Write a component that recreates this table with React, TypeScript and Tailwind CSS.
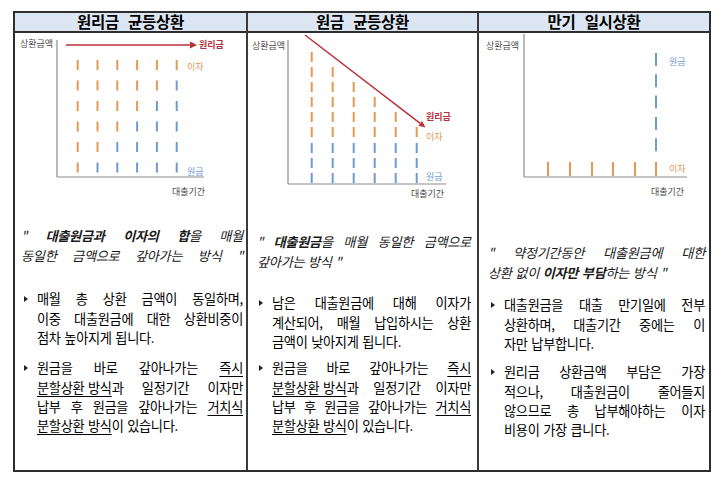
import type { ReactNode } from 'react'

const ORANGE = '#e39a55'
const BLUE = '#6f9bd1'
const RED = '#b7313a'
const AXIS = '#8c8c8c'
const LABEL = '#4a4a4a'

function Label({
  x,
  y,
  color = LABEL,
  bold = false,
  children,
}: {
  x: number
  y: number
  color?: string
  bold?: boolean
  children: ReactNode
}) {
  return (
    <text x={x} y={y} fontSize={9} fill={color} fontWeight={bold ? 700 : 400}>
      {children}
    </text>
  )
}

const six = [0, 1, 2, 3, 4, 5]

// 원리금 균등: total stays flat, principal share grows each period
function EqualPaymentChart() {
  const segs = [27, 47.5, 68, 88.5, 109, 129.5]
  return (
    <svg width={231} height={170} className="block shrink-0">
      <Label x={5} y={14}>상환금액</Label>
      <line x1={42} y1={7} x2={42} y2={144} stroke={AXIS} strokeWidth={1.2} />
      <line x1={42} y1={144} x2={189} y2={144} stroke={AXIS} strokeWidth={1.2} />
      <line x1={51} y1={12} x2={176} y2={12} stroke={RED} strokeWidth={1.5} />
      <polygon points="175,8.5 182,12 175,15.5" fill={RED} />
      <Label x={184} y={15} color={RED} bold>
        원리금
      </Label>
      {six.map((i) =>
        segs.map((y, j) => (
          <line
            key={`${i}-${j}`}
            x1={62.7 + i * 19.8}
            x2={62.7 + i * 19.8}
            y1={y}
            y2={y + 10}
            stroke={j < 6 - i ? ORANGE : BLUE}
            strokeWidth={2}
          />
        ))
      )}
      <Label x={172} y={37} color={ORANGE}>이자</Label>
      <Label x={172} y={142} color={BLUE}>원금</Label>
      <Label x={157} y={162}>대출기간</Label>
    </svg>
  )
}

// 원금 균등: principal flat, interest shrinks
function EqualPrincipalChart() {
  const blue = [110, 125, 140]
  const orange = [94, 79, 64, 49, 34, 19]
  return (
    <svg width={229} height={170} className="block shrink-0">
      <Label x={4} y={16}>상환금액</Label>
      <line x1={40} y1={7} x2={40} y2={151} stroke={AXIS} strokeWidth={1.2} />
      <line x1={40} y1={151} x2={198} y2={151} stroke={AXIS} strokeWidth={1.2} />
      {six.map((i) => {
        const x = 63.7 + i * 21
        return (
          <g key={i}>
            {blue.map((y) => (
              <line key={`b${y}`} x1={x} x2={x} y1={y} y2={y + 10} stroke={BLUE} strokeWidth={2} />
            ))}
            {orange.slice(0, 6 - i).map((y) => (
              <line key={`o${y}`} x1={x} x2={x} y1={y} y2={y + 10} stroke={ORANGE} strokeWidth={2} />
            ))}
          </g>
        )
      })}
      <line x1={57} y1={2} x2={172.2} y2={90.3} stroke={RED} strokeWidth={1.5} />
      <polygon points="170.4,92.7 177.5,94.4 174.1,88" fill={RED} />
      <Label x={178} y={87} color={RED} bold>
        원리금
      </Label>
      <Label x={178} y={107} color={ORANGE}>이자</Label>
      <Label x={178} y={147} color={BLUE}>원금</Label>
      <Label x={163} y={164}>대출기간</Label>
    </svg>
  )
}

// 만기 일시: interest only, principal at the end
function BulletChart() {
  const orangeX = [69, 91, 113, 134, 156, 177]
  return (
    <svg width={230} height={170} className="block shrink-0">
      <Label x={7} y={16}>상환금액</Label>
      <line x1={45} y1={1} x2={45} y2={144} stroke={AXIS} strokeWidth={1.2} />
      <line x1={45} y1={144} x2={208} y2={144} stroke={AXIS} strokeWidth={1.2} />
      {[20, 41.3, 62.6, 83.9, 105.2].map((y) => (
        <line key={y} x1={177} x2={177} y1={y} y2={y + 13} stroke={BLUE} strokeWidth={2} />
      ))}
      {orangeX.map((x) => (
        <line key={x} x1={x} x2={x} y1={129} y2={143} stroke={ORANGE} strokeWidth={2} />
      ))}
      <Label x={190} y={32} color={BLUE}>원금</Label>
      <Label x={190} y={139} color={ORANGE}>이자</Label>
      <Label x={172} y={162}>대출기간</Label>
    </svg>
  )
}

// justified line: words spread edge to edge
function J({ w }: { w: ReactNode[] }) {
  return (
    <div className="flex justify-between whitespace-nowrap">
      {w.map((item, i) => (
        <span key={i}>{item}</span>
      ))}
    </div>
  )
}

function L({ children }: { children: ReactNode }) {
  return <div className="whitespace-nowrap">{children}</div>
}

function U({ children }: { children: ReactNode }) {
  return <span className="underline underline-offset-[3px] decoration-1">{children}</span>
}

function Bullet({
  marker,
  className = '',
  children,
}: {
  marker: string
  className?: string
  children: ReactNode
}) {
  return (
    <div className={`flex ${className}`}>
      <div className={`flex h-[19.2px] shrink-0 items-center ${marker}`}>
        <svg width={4} height={6} className="block">
          <polygon points="0,0 4,3 0,6" fill="#222" />
        </svg>
      </div>
      <div className="flex-1">{children}</div>
    </div>
  )
}

function Header({ children }: { children: ReactNode }) {
  return (
    <div className="flex h-[20px] shrink-0 items-center justify-center border-b-2 border-[#2e2e2e] bg-[#dce6f2] text-[15.5px] font-bold leading-none tracking-[-0.3px] text-black [word-spacing:6px]">
      {children}
    </div>
  )
}

const sharedSecond = (
  <>
    <J w={['원금을', '바로', '갚아나가는', <U>즉시</U>]} />
    <J
      w={[
        <>
          <U>분할상환 방식</U>과
        </>,
        '일정기간',
        '이자만',
      ]}
    />
    <J w={['납부', '후', '원금을', '갚아나가는', <U>거치식</U>]} />
    <L>
      <U>분할상환 방식</U>이 있습니다.
    </L>
  </>
)

const body = 'text-[13.2px] leading-[19.2px] tracking-[-0.3px] text-black [word-spacing:1px]'

export default function App() {
  return (
    <div className="h-[481px] w-[726px] bg-white pl-[13px] pt-[11px] font-['Noto_Sans_CJK_KR',sans-serif]">
      <div className="flex h-[461px] w-[698px] border-2 border-[#2e2e2e]">
        {/* 원리금 균등상환 */}
        <div className="flex w-[233px] shrink-0 flex-col border-r-2 border-[#3a3a3a]">
          <Header>원리금 균등상환</Header>
          <EqualPaymentChart />
          <div className={`pl-[6px] pr-[3px] pt-[23.4px] ${body}`}>
            <div className="italic text-[#1a1a1a]">
              <J
                w={[
                  '"',
                  <b>대출원금과</b>,
                  <b>이자의</b>,
                  <>
                    <b>합</b>을
                  </>,
                  '매월',
                ]}
              />
              <J w={['동일한', '금액으로', '갚아가는', '방식', '"']} />
            </div>
            <Bullet marker="w-[16px] pl-[3px]" className="mt-[24.6px]">
              <J w={['매월', '총', '상환', '금액이', '동일하며,']} />
              <J w={['이중', '대출원금에', '대한', '상환비중이']} />
              <L>점차 높아지게 됩니다.</L>
            </Bullet>
            <Bullet marker="w-[16px] pl-[3px]" className="mt-[11.4px]">
              {sharedSecond}
            </Bullet>
          </div>
        </div>

        {/* 원금 균등상환 */}
        <div className="flex w-[231px] shrink-0 flex-col border-r-2 border-[#3a3a3a]">
          <Header>원금 균등상환</Header>
          <EqualPrincipalChart />
          <div className={`pl-[9px] pr-[6px] pt-[29.4px] ${body}`}>
            <div className="italic text-[#1a1a1a]">
              <J
                w={[
                  '"',
                  <>
                    <b>대출원금</b>을
                  </>,
                  '매월',
                  '동일한',
                  '금액으로',
                ]}
              />
              <L>갚아가는 방식 "</L>
            </div>
            <Bullet marker="w-[15px] pl-[2px]" className="mt-[22.6px]">
              <J w={['남은', '대출원금에', '대해', '이자가']} />
              <J w={['계산되어,', '매월', '납입하시는', '상환']} />
              <L>금액이 낮아지게 됩니다.</L>
            </Bullet>
            <Bullet marker="w-[15px] pl-[2px]" className="mt-[7.4px]">
              {sharedSecond}
            </Bullet>
          </div>
        </div>

        {/* 만기 일시상환 */}
        <div className="flex flex-1 flex-col">
          <Header>만기 일시상환</Header>
          <BulletChart />
          <div className={`pl-[9px] pr-[4px] pt-[40.4px] ${body}`}>
            <div className="italic text-[#1a1a1a]">
              <J w={['"', '약정기간동안', '대출원금에', '대한']} />
              <L>
                상환 없이 <b>이자만 부담</b>하는 방식 "
              </L>
            </div>
            <Bullet marker="w-[16px] pl-[3px]" className="mt-[13.6px]">
              <J w={['대출원금을', '대출', '만기일에', '전부']} />
              <J w={['상환하며,', '대출기간', '중에는', '이']} />
              <L>자만 납부합니다.</L>
            </Bullet>
            <Bullet marker="w-[16px] pl-[3px]" className="mt-[9.4px]">
              <J w={['원리금', '상환금액', '부담은', '가장']} />
              <J w={['적으나,', '대출원금이', '줄어들지']} />
              <J w={['않으므로', '총', '납부해야하는', '이자']} />
              <L>비용이 가장 큽니다.</L>
            </Bullet>
          </div>
        </div>
      </div>
    </div>
  )
}
